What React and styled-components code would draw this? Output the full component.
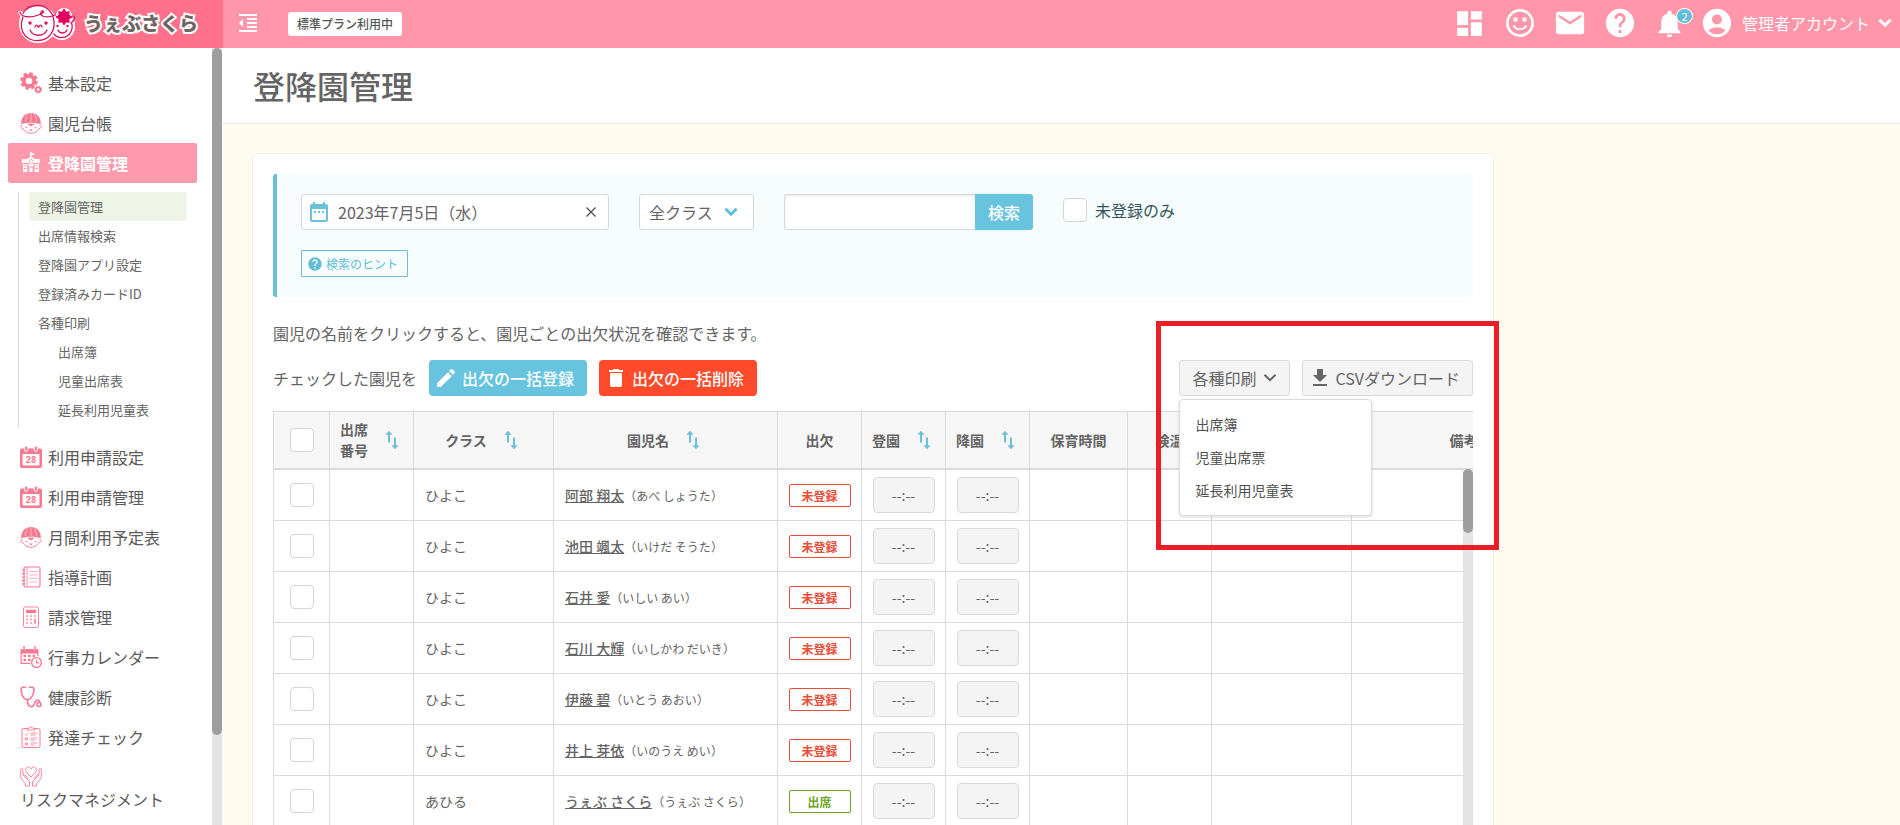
import React, { useState } from "react";
import styled, { createGlobalStyle } from "styled-components";
import {
  MdDashboard,
  MdEmail,
  MdHelp,
  MdNotifications,
  MdAccountCircle,
  MdDateRange,
  MdEdit,
  MdDelete,
  MdFileDownload,
} from "react-icons/md";

const pink = "#f8788f";

const menuTop = [
  { label: "基本設定", icon: "gears" },
  { label: "園児台帳", icon: "child" },
  { label: "登降園管理", icon: "school", active: true },
];

const subMenu = [
  { label: "登降園管理", active: true },
  { label: "出席情報検索" },
  { label: "登降園アプリ設定" },
  { label: "登録済みカードID" },
  { label: "各種印刷" },
  { label: "出席簿", nested: true },
  { label: "児童出席表", nested: true },
  { label: "延長利用児童表", nested: true },
];

const menuBottom = [
  { label: "利用申請設定", icon: "calendar" },
  { label: "利用申請管理", icon: "calendar" },
  { label: "月間利用予定表", icon: "child" },
  { label: "指導計画", icon: "notebook" },
  { label: "請求管理", icon: "calculator" },
  { label: "行事カレンダー", icon: "schedule" },
  { label: "健康診断", icon: "stethoscope" },
  { label: "発達チェック", icon: "checklist" },
  { label: "リスクマネジメント", icon: "hands" },
];

const columns = [
  { key: "check", width: 56 },
  { key: "no", label: "出席\n番号", width: 84, sort: true },
  { key: "class", label: "クラス", width: 140, sort: true },
  { key: "name", label: "園児名", width: 224, sort: true },
  { key: "status", label: "出欠", width: 84 },
  { key: "in", label: "登園", width: 84, sort: true },
  { key: "out", label: "降園", width: 84, sort: true },
  { key: "hours", label: "保育時間", width: 98 },
  { key: "temp", label: "検温", width: 84 },
  { key: "contact", label: "連絡事項", width: 140 },
  { key: "note", label: "備考", width: 224 },
];

const children = [
  { room: "ひよこ", name: "阿部 翔太", kana: "あべ しょうた" },
  { room: "ひよこ", name: "池田 颯太", kana: "いけだ そうた" },
  { room: "ひよこ", name: "石井 愛", kana: "いしい あい" },
  { room: "ひよこ", name: "石川 大輝", kana: "いしかわ だいき" },
  { room: "ひよこ", name: "伊藤 碧", kana: "いとう あおい" },
  { room: "ひよこ", name: "井上 芽依", kana: "いのうえ めい" },
  { room: "あひる", name: "うぇぶ さくら", kana: "うぇぶ さくら", present: true },
];

const prints = ["出席簿", "児童出席票", "延長利用児童表"];

const icons = {
  gears: (
    <>
      <circle cx="9" cy="9" r="5.2" fill="none" stroke={pink} strokeWidth="3.8" />
      <circle cx="9" cy="9" r="7.700" fill="none" stroke={pink} strokeWidth="2.2" strokeDasharray="3.600 2.450" />
      <circle cx="18.2" cy="17.6" r="2.3" fill="none" stroke={pink} strokeWidth="1.8" />
      <circle cx="18.2" cy="17.6" r="3.5" fill="none" stroke={pink} strokeWidth="1" strokeDasharray="1.5 1.25" />
    </>
  ),
  child: (
    <>
      <path d="M1.200 11.500C1.200 5 5.500 1 11 1s9.800 4 9.800 10.500l.9 1c-6-2.300-15.400-2.300-21.400 0z" fill={pink} />
      <path d="M11 1v9M7.500 2.500C6 5 5.500 7.500 5.500 10M14.500 2.500C16 5 16.500 7.500 16.500 10" fill="none" stroke="#fff" strokeWidth="0.500" />
      <path d="M2.500 13.500c-1.500 0-2 1-1.500 2 .4.800 1 1.100 2 1.100C4.500 19.500 7.500 21.300 11 21.300s6.500-1.800 8-4.700c1 0 1.600-.3 2-1.100.5-1 0-2-1.500-2" fill="none" stroke={pink} strokeWidth="0.900" />
      <path d="M7 12c2.500-.5 5.500-.5 8 0l-4 2.300zM9 17.600h4l-2 1.700z" fill={pink} />
      <circle cx="6.500" cy="15.500" r="0.800" fill={pink} />
      <circle cx="15.500" cy="15.500" r="0.800" fill={pink} />
    </>
  ),
  school: (
    <>
      <path d="M10.500 0v5M10.500 .8L14 2l-3.500 1.400" stroke="#fff" fill="#fff" strokeWidth="1" />
      <path d="M2.500 7h5L11 4l3.500 3h5l1 4h-19zM3 12h4.500v8H3zM14.500 12H19v8h-4.500zM8.300 11h5.400v9H8.300z" fill="#fff" />
      <circle cx="11" cy="9.500" r="2" fill="none" stroke="#ff9aab" strokeWidth="0.800" />
      <path d="M9 20v-5h4v5M4 16.500h2.500M15.500 16.500H18M4.300 14h2M15.700 14h2M8 11v9M14 11v9" stroke="#ff9aab" strokeWidth="1" fill="none" />
    </>
  ),
  calendar: (
    <>
      <path fillRule="evenodd" d="M2 2.500h18a2 2 0 0 1 2 2V20a2 2 0 0 1-2 2H2a2 2 0 0 1-2-2V4.500a2 2 0 0 1 2-2zM2.500 8v10.500a1 1 0 0 0 1 1h15a1 1 0 0 0 1-1V8z" fill={pink} />
      <rect x="4.700" y="0" width="3" height="5.500" rx="1.500" fill={pink} stroke="#fff" strokeWidth="0.900" />
      <rect x="14.300" y="0" width="3" height="5.500" rx="1.500" fill={pink} stroke="#fff" strokeWidth="0.900" />
      <text x="11" y="16.900" textAnchor="middle" fontSize="9" fontWeight="700" fontFamily="Roboto, sans-serif" fill={pink}>28</text>
    </>
  ),
  notebook: (
    <g fill="none" stroke={pink}>
      <rect x="4" y="1" width="16" height="20" rx="1.500" strokeWidth="1.200" />
      <path d="M7 1v20" strokeWidth="0.800" />
      <path d="M1.800 4h3.400M1.800 7.500h3.400M1.800 11h3.400M1.800 14.500h3.400M1.800 18h3.400" strokeWidth="1.200" />
      <path d="M9.500 5.500h8M9.500 9h8M9.500 12.500h8M9.500 16h8" strokeWidth="0.600" />
    </g>
  ),
  calculator: (
    <>
      <rect x="3.500" y="1" width="15" height="20.500" rx="1.800" fill="none" stroke={pink} strokeWidth="0.900" />
      <rect x="6" y="3.800" width="10" height="3.200" fill={pink} />
      <path d="M6.200 10h1.600M10.200 10h1.600M14.200 10h1.600M6.200 13.500h1.600M10.200 13.500h1.600M6.200 17h1.600M10.200 17h1.600" stroke={pink} strokeWidth="1.600" />
      <path d="M15 12.700v5.100" stroke={pink} strokeWidth="1.600" />
    </>
  ),
  schedule: (
    <>
      <path d="M0.700 3h17.600v4.500H0.700z" fill={pink} />
      <path d="M4 0v4M15 0v4" stroke="#fff" strokeWidth="2.600" />
      <path d="M4 0v4M15 0v4" stroke={pink} strokeWidth="1.400" />
      <path d="M1.200 5v12.300h9M17.800 6v4" fill="none" stroke={pink} strokeWidth="1.200" />
      <path d="M3.500 9.800h2.500M8 9.800h2.500M12.500 9.800H15M3.500 13.800h2.500M8 13.800h2.500" stroke={pink} strokeWidth="2.200" />
      <circle cx="16.500" cy="16.500" r="4.900" fill="#fff" stroke={pink} strokeWidth="1.300" />
      <path d="M16.500 13.500v3.300h2.800" fill="none" stroke={pink} strokeWidth="1.200" />
    </>
  ),
  stethoscope: (
    <g fill="none" stroke={pink} strokeWidth="1.600" strokeLinecap="round">
      <path d="M5.500 1.300H3.200C1.500 1.300.9 2.300 1 4c.2 4 2.300 9 5.300 9.500h2C11.500 13 13.800 8 14 4c.1-1.700-.5-2.700-2.200-2.700H9.500" />
      <path d="M7.500 13.500c-.3 4 .8 7.200 4 7.200 3.500 0 2.800-6.700 6-6.700 1.300 0 2 .9 2 2" />
      <circle cx="19" cy="18.500" r="2" />
    </g>
  ),
  checklist: (
    <g fill="none" stroke={pink}>
      <path d="M7 2.500H3.500a1.500 1.500 0 0 0-1.500 1.500v16a1.500 1.500 0 0 0 1.500 1.500h15a1.500 1.500 0 0 0 1.500-1.500V4a1.500 1.500 0 0 0-1.500-1.500H15" strokeWidth="1" />
      <path d="M7 4V2.300h2.200a1.900 1.900 0 0 1 3.600 0H15V4z" strokeWidth="0.900" />
      <path d="M5 8.200l1.200 1.200L8.500 6.500M10.500 7h7M10.500 9h5M10.500 12h7M10.500 14h5M10.500 17h7M10.500 19h4" strokeWidth="0.800" />
      <path d="M5.300 12h2v2h-2zM5.300 17h2v2h-2z" strokeWidth="0.900" />
    </g>
  ),
  hands: (
    <g fill="none" stroke={pink} strokeWidth="0.900" strokeLinejoin="round">
      <path d="M11 12L6.500 7.300C4.500 5 6 2 8.300 2c1.300 0 2.200.8 2.700 1.800C11.500 2.800 12.400 2 13.700 2 16 2 17.500 5 15.500 7.300z" />
      <path d="M.7 4.500c0-1.500 2-1.500 2.100 0l.4 6 4.500 4c1.300 1 1.800 2 1.800 3.500v3H5.300v-2.500L1.500 14C.8 13 .7 12.500.7 11.500zM3.300 10.500c1-1.200 2.200-.3 2.800.6L8 13.500" />
      <path d="M21.300 4.500c0-1.500-2-1.500-2.100 0l-.4 6-4.500 4c-1.300 1-1.800 2-1.800 3.500v3h4.200v-2.500l3.800-4.500c.7-1 .8-1.500.8-2.500zM18.700 10.500c-1-1.200-2.200-.3-2.800.6L14 13.500" />
    </g>
  ),
};

const MenuIcon = ({ name }) => (
  <svg width="22" height="22" viewBox="0 0 22 22" aria-hidden="true">
    {icons[name]}
  </svg>
);

const Chevron = ({ width = 2 }) => (
  <svg width="14" height="14" viewBox="0 0 14 14" fill="none" stroke="currentColor" strokeWidth={width} aria-hidden="true">
    <path d="M1.500 3.700L7 9.200l5.500-5.500" />
  </svg>
);

const SortIcon = () => (
  <svg width="20" height="20" viewBox="0 0 20 20" fill="none" stroke="#6cc0da" strokeWidth="2" aria-hidden="true">
    <path d="M6 12.500V3M12 7.500V17" />
    <path d="M6 .8l3.600 4H2.400zM12 19.200l3.600-4H8.400z" fill="#6cc0da" stroke="none" />
  </svg>
);

const SmileIcon = () => (
  <svg width="28" height="28" viewBox="0 0 28 28" fill="none" stroke="#fff" aria-hidden="true">
    <circle cx="14" cy="14" r="12.600" strokeWidth="2.700" />
    <circle cx="9.500" cy="10.500" r="2.200" fill="#fff" stroke="none" />
    <circle cx="18.500" cy="10.500" r="2.200" fill="#fff" stroke="none" />
    <path d="M7.500 16.500c2.800 5 10.200 5 13 0" strokeWidth="2" />
  </svg>
);

const CollapseIcon = () => (
  <svg width="18" height="18" viewBox="0 0 18 18" fill="#fff" aria-hidden="true">
    <path d="M0 0h18v2H0zM8 4h10v2H8zM8 8h10v2H8zM8 12h10v2H8zM0 16h18v2H0zM4 5v8L0 9z" />
  </svg>
);

const LogoMark = () => (
  <svg width="58" height="42" viewBox="0 0 58 42" aria-hidden="true">
    <g fill="#fff" stroke="#fff" strokeWidth="4" strokeLinejoin="round">
      <circle cx="20" cy="22" r="17" />
      <circle cx="44" cy="25" r="11" />
      <circle cx="46" cy="14" r="6" />
      <path d="M2 9c1 6 6 6 10 4" />
      <path d="M54 16l1 6" />
    </g>
    <g fill="none" stroke="#d6145f" strokeWidth="1.300" strokeLinecap="round">
      <path d="M2 10c1 6 12 6 21 2 4-2 2-5 0-2-2 4 5 7 14 3" />
      <path d="M5 15C-1 32 11 39 20 38.500c11-.5 17-9 16-19C35 9 28 3.500 20 3.500c-7 0-12 2-15 8" />
      <path d="M36 32c4 5.500 14 4.500 17-2.500 1.500-3 1.500-6 .5-9M56 14c1 3 0 5-3 7" />
      <path d="M12 28c3 7 14 7 17 0M17 25c0-2.500 3-2.500 3 0M21 25c0-2.500 3-2.500 3 0M40 28c1.500 4 7 4 9 0" />
    </g>
    <g fill="#d6145f">
      <circle cx="12" cy="21" r="1.700" />
      <circle cx="28" cy="21" r="1.700" />
      <circle cx="39.500" cy="24" r="1.200" />
      <circle cx="49.500" cy="24" r="1.200" />
    </g>
    <path
      d="M46 7.500l1.600 3.100 3.400-.6-.5 3.400 3 1.600-3 1.600.5 3.400-3.400-.6L46 22.300l-1.600-2.900-3.400.6.500-3.400-3-1.600 3-1.600-.5-3.400 3.400.6z"
      fill="#e4005f"
      stroke="#e4005f"
      strokeWidth="1.500"
      strokeLinejoin="round"
    />
  </svg>
);

export default function App() {
  const [date, setDate] = useState("2023年7月5日（水）");
  const [open, setOpen] = useState(true);

  return (
    <Page>
      <GlobalStyle />
      <Header>
        <Brand href="#">
          <LogoMark />
          <BrandName>うぇぶさくら</BrandName>
        </Brand>
        <CollapseButton aria-label="メニューを閉じる">
          <CollapseIcon />
        </CollapseButton>
        <PlanBadge>標準プラン利用中</PlanBadge>
        <HeaderTools>
          <ToolButton aria-label="ダッシュボード"><MdDashboard size={33} /></ToolButton>
          <ToolButton aria-label="スマイル"><SmileIcon /></ToolButton>
          <ToolButton aria-label="メール"><MdEmail size={34} /></ToolButton>
          <ToolButton aria-label="ヘルプ"><MdHelp size={34} /></ToolButton>
          <ToolButton aria-label="お知らせ">
            <MdNotifications size={33} />
            <Count>2</Count>
          </ToolButton>
          <AccountButton>
            <MdAccountCircle size={34} />
            管理者アカウント
            <Chevron width={3} />
          </AccountButton>
        </HeaderTools>
      </Header>

      <Body>
        <Sidebar>
          <Menu>
            {menuTop.map((item) => (
              <MenuItem href="#" key={item.label} $active={item.active}>
                <MenuIcon name={item.icon} />
                <span>{item.label}</span>
              </MenuItem>
            ))}
            <SubMenu>
              {subMenu.map((item) => (
                <SubItem href="#" key={item.label} $active={item.active} $nested={item.nested}>
                  {item.label}
                </SubItem>
              ))}
            </SubMenu>
            {menuBottom.map((item) => (
              <MenuItem href="#" key={item.label}>
                <MenuIcon name={item.icon} />
                <span>{item.label}</span>
              </MenuItem>
            ))}
          </Menu>
          <ScrollTrack><ScrollThumb $size="88.4%" /></ScrollTrack>
        </Sidebar>

        <Main>
          <TitleBar><h1>登降園管理</h1></TitleBar>
          <Card>
            <Filter>
              <FilterRow>
                <DateBox>
                  <MdDateRange size={24} color="#6cc0da" />
                  <input aria-label="日付" value={date} onChange={(e) => setDate(e.target.value)} />
                  <button aria-label="クリア" onClick={() => setDate("")}>
                    <svg width="10" height="10" viewBox="0 0 10 10" stroke="#555" strokeWidth="1.400">
                      <path d="M.5 .5l9 9M9.500 .5l-9 9" />
                    </svg>
                  </button>
                </DateBox>
                <SelectBox>
                  <select aria-label="クラス" defaultValue="all">
                    <option value="all">全クラス</option>
                    <option>ひよこ</option>
                    <option>あひる</option>
                  </select>
                  <Chevron width={3} />
                </SelectBox>
                <SearchBox>
                  <input aria-label="キーワード" />
                  <button>検索</button>
                </SearchBox>
                <CheckLabel>
                  <Checkbox type="checkbox" />
                  未登録のみ
                </CheckLabel>
              </FilterRow>
              <HintButton>
                <MdHelp size={16} />
                検索のヒント
              </HintButton>
            </Filter>

            <Lead>園児の名前をクリックすると、園児ごとの出欠状況を確認できます。</Lead>

            <Toolbar>
              <span>チェックした園児を</span>
              <BulkButton $color="#68c4de"><MdEdit size={24} />出欠の一括登録</BulkButton>
              <BulkButton $color="#ff4b2b"><MdDelete size={24} />出欠の一括削除</BulkButton>
              <Actions>
                <GrayButton $pad={12} $gap={7} onClick={() => setOpen(!open)}>
                  各種印刷
                  <Chevron />
                </GrayButton>
                <GrayButton $pad={5} $gap={3}>
                  <MdFileDownload size={24} />
                  CSVダウンロード
                </GrayButton>
                {open && (
                  <Dropdown>
                    {prints.map((p) => (
                      <a href="#" key={p}>{p}</a>
                    ))}
                  </Dropdown>
                )}
                <Highlight />
              </Actions>
            </Toolbar>

            <TableArea>
              <Table>
                <colgroup>
                  {columns.map((c) => (
                    <col key={c.key} width={c.width} />
                  ))}
                </colgroup>
                <thead>
                  <tr>
                    {columns.map((c) => (
                      <th key={c.key}>
                        <HeadCell>
                          {c.label || <Checkbox type="checkbox" aria-label="すべて選択" />}
                          {c.sort && <SortIcon />}
                        </HeadCell>
                      </th>
                    ))}
                  </tr>
                </thead>
                <tbody>
                  {children.map((c) => (
                    <tr key={c.name}>
                      <CenterCell><Checkbox type="checkbox" aria-label={c.name} /></CenterCell>
                      <td />
                      <td>{c.room}</td>
                      <td>
                        <NameLink href="#">{c.name}</NameLink>
                        <Kana>（{c.kana}）</Kana>
                      </td>
                      <CenterCell>
                        <Status $color={c.present ? "#6fa52a" : "#e8503c"}>
                          {c.present ? "出席" : "未登録"}
                        </Status>
                      </CenterCell>
                      <CenterCell><TimeButton>--:--</TimeButton></CenterCell>
                      <CenterCell><TimeButton>--:--</TimeButton></CenterCell>
                      <td />
                      <td />
                      <td />
                      <td />
                    </tr>
                  ))}
                </tbody>
              </Table>
              <TableScroll><ScrollThumb $size="64px" /></TableScroll>
            </TableArea>
          </Card>
        </Main>
      </Body>
    </Page>
  );
}

const GlobalStyle = createGlobalStyle`
  * {
    box-sizing: border-box;
  }

  body {
    margin: 0;
    overflow: hidden;
    color: #646464;
    background: #fffbee;
    font-family: "Noto Sans CJK JP", sans-serif;
    font-size: 16px;
    line-height: 24px;
  }

  button, input, select {
    margin: 0;
    padding: 0;
    border: 0;
    background: none;
    color: inherit;
    font: inherit;
  }

  button {
    cursor: pointer;
  }

  a {
    color: inherit;
    text-decoration: none;
  }

  svg {
    display: block;
    flex: none;
  }
`;

const Page = styled.div`
  display: flex;
  flex-direction: column;
  height: 100vh;
`;

const Header = styled.header`
  display: flex;
  flex: none;
  align-items: center;
  height: 48px;
  background: #ff96a9;
  color: #fff;
`;

const Brand = styled.a`
  display: flex;
  align-items: center;
  gap: 8px;
  width: 223px;
  height: 100%;
  padding: 0 0 2px 18px;
  background: #ff708a;
`;

const BrandName = styled.span`
  color: #6f6563;
  font-size: 19px;
  font-weight: 900;
  -webkit-text-stroke: 4px #fff;
  paint-order: stroke fill;
`;

const CollapseButton = styled.button`
  margin: 0 31px 2px 16px;
`;

const PlanBadge = styled.span`
  padding: 0 9px;
  border-radius: 3px;
  background: #fff;
  color: #555;
  font-size: 12px;
  font-weight: 500;
`;

const HeaderTools = styled.div`
  display: flex;
  align-items: center;
  margin-left: auto;
  padding: 0 8px 2px 0;
`;

const ToolButton = styled.button`
  position: relative;
  display: flex;
  justify-content: center;
  width: 50px;
`;

const Count = styled.span`
  position: absolute;
  top: 1px;
  right: 2px;
  width: 17px;
  height: 16px;
  border: 1px solid #fff;
  border-radius: 50%;
  background: #62bdd8;
  font-size: 11px;
  line-height: 15px;
`;

const AccountButton = styled.button`
  display: flex;
  align-items: center;
  gap: 8px;
  padding-left: 5px;
`;

const Body = styled.div`
  display: flex;
  flex: 1;
  min-height: 0;
`;

const Sidebar = styled.aside`
  display: flex;
  flex: none;
  width: 223px;
  background: #fff;
`;

const Menu = styled.nav`
  flex: 1;
  padding: 15px 15px 0 8px;
  overflow: hidden;
`;

const MenuItem = styled.a`
  display: flex;
  flex-wrap: wrap;
  align-items: center;
  column-gap: 6px;
  padding: 8px 12px;
  border-radius: 2px;
  background: ${(p) => (p.$active ? "#ff9aac" : "none")};
  color: ${(p) => (p.$active ? "#fff" : "#5a5a5a")};
  font-weight: ${(p) => (p.$active ? 700 : 400)};
`;

const SubMenu = styled.div`
  margin: 9px 10px 10px;
  padding: 0 0 3px 10px;
  border-left: 1px solid #d8d8d8;
`;

const SubItem = styled.a`
  display: block;
  padding-left: ${(p) => (p.$nested ? 29 : 9)}px;
  border-radius: 2px;
  background: ${(p) => (p.$active ? "#eef5e6" : "none")};
  font-size: 13px;
  line-height: 29px;
`;

const ScrollTrack = styled.div`
  width: 10px;
  margin-right: 1px;
  background: #e4e4e4;
`;

const ScrollThumb = styled.div`
  height: ${(p) => p.$size};
  border-radius: 5px;
  background: #9e9e9e;
`;

const Main = styled.main`
  flex: 1;
  min-width: 0;
  overflow: hidden;
`;

const TitleBar = styled.div`
  padding: 13px 30px 14px;
  border-bottom: 1px solid #e9e9e9;
  background: #fff;

  h1 {
    margin: 0;
    font-size: 32px;
    font-weight: 500;
    line-height: 48px;
  }
`;

const Card = styled.section`
  max-width: 1242px;
  margin: 29px;
  padding: 20px;
  border: 1px solid #f0eee8;
  border-radius: 6px;
  background: #fff;
`;

const Filter = styled.div`
  display: flex;
  flex-direction: column;
  align-items: flex-start;
  gap: 20px;
  padding: 20px 24px;
  border-left: 4px solid #6cc0d6;
  border-radius: 3px;
  background: #f7fdfd;
`;

const FilterRow = styled.div`
  display: flex;
  flex-wrap: wrap;
  gap: 30px;
`;

const DateBox = styled.div`
  display: flex;
  align-items: center;
  gap: 7px;
  width: 308px;
  height: 36px;
  padding: 0 7px 0 5px;
  border: 1px solid #d8d8d8;
  border-radius: 3px;
  background: #fff;

  input {
    flex: 1;
    min-width: 0;
  }

  button {
    padding: 5px;
  }
`;

const SelectBox = styled.div`
  display: flex;
  align-items: center;
  width: 115px;
  height: 36px;
  border: 1px solid #d8d8d8;
  border-radius: 3px;
  background: #fff;
  color: #62bdd8;

  select {
    width: 84px;
    padding-left: 9px;
    appearance: none;
    color: #646464;
  }
`;

const SearchBox = styled.div`
  display: flex;
  height: 36px;

  input {
    width: 191px;
    padding: 0 8px;
    border: 1px solid #d8d8d8;
    border-right: 0;
    border-radius: 3px 0 0 3px;
    background: #fff;
    box-shadow: inset 0 1px 2px rgba(0, 0, 0, 0.1);
  }

  button {
    width: 58px;
    border-radius: 0 3px 3px 0;
    background: #68c4de;
    color: #fff;
    font-weight: 500;
  }
`;

const CheckLabel = styled.label`
  display: flex;
  align-items: center;
  gap: 8px;
  height: 32px;
  color: #35555e;
`;

const Checkbox = styled.input`
  width: 24px;
  height: 24px;
  border: 1px solid #d5d5d5;
  border-radius: 4px;
  background: #fff;
  appearance: none;
  vertical-align: middle;

  &:checked {
    background: #68c4de;
  }
`;

const HintButton = styled.button`
  display: flex;
  align-items: center;
  gap: 3px;
  height: 27px;
  padding: 0 9px 0 5px;
  border: 1px solid #6cc0d6;
  border-radius: 1px;
  color: #62bdd8;
  font-size: 12px;
`;

const Lead = styled.p`
  margin: 24px 0 15px;
`;

const Toolbar = styled.div`
  display: flex;
  align-items: center;
  margin-bottom: 15px;
`;

const BulkButton = styled.button`
  display: flex;
  align-items: center;
  gap: 4px;
  height: 36px;
  margin-left: 12px;
  padding: 0 13px 0 5px;
  border-radius: 4px;
  background: ${(p) => p.$color};
  color: #fff;
  font-weight: 500;
`;

const Actions = styled.div`
  position: relative;
  display: flex;
  gap: 12px;
  margin-left: auto;
`;

const GrayButton = styled.button`
  display: flex;
  align-items: center;
  gap: ${(p) => p.$gap}px;
  height: 36px;
  padding: 0 12px 0 ${(p) => p.$pad}px;
  border: 1px solid #dadada;
  border-radius: 3px;
  background: #f4f4f4;
`;

const Dropdown = styled.div`
  position: absolute;
  z-index: 2;
  top: 39px;
  left: 0;
  width: 193px;
  padding: 8px 0;
  border: 1px solid #dcdcdc;
  border-radius: 4px;
  background: #fff;
  box-shadow: 0 1px 3px rgba(0, 0, 0, 0.15);
  color: #505050;
  font-size: 14px;

  a {
    display: block;
    padding: 0 15px;
    line-height: 33px;
  }
`;

const Highlight = styled.div`
  position: absolute;
  z-index: 1;
  inset: -39px -26px -154px -23px;
  border: 5px solid #e81f27;
  pointer-events: none;
`;

const TableArea = styled.div`
  position: relative;
  overflow: hidden;
`;

const Table = styled.table`
  width: 1302px;
  border-collapse: separate;
  border-spacing: 0;
  border-top: 1px solid #dadada;
  table-layout: fixed;
  font-size: 14px;
  line-height: 21px;

  th {
    height: 58px;
    padding: 0;
    border-bottom: 2px solid #dadada;
    border-left: 1px solid #dadada;
    background: #f6f6f6;
    white-space: pre;
  }

  td {
    height: 51px;
    padding: 0 0 0 11px;
    border-bottom: 1px solid #dadada;
    border-left: 1px solid #dadada;
    white-space: nowrap;
  }
`;

const HeadCell = styled.div`
  display: flex;
  align-items: center;
  justify-content: center;
  gap: 15px;
`;

const CenterCell = styled.td`
  && {
    padding: 0;
    text-align: center;
  }
`;

const NameLink = styled.a`
  font-weight: 500;
  text-decoration: underline;
`;

const Kana = styled.span`
  font-size: 12px;
`;

const Status = styled.button`
  width: 62px;
  height: 23px;
  border: 1px solid currentColor;
  border-radius: 2px;
  color: ${(p) => p.$color};
  font-size: 12px;
  font-weight: 700;
  line-height: 21px;
  vertical-align: middle;
`;

const TimeButton = styled.button`
  width: 62px;
  height: 36px;
  border: 1px solid #dadada;
  border-radius: 4px;
  background: #f4f4f4;
  vertical-align: middle;
`;

const TableScroll = styled.div`
  position: absolute;
  top: 58px;
  right: 0;
  bottom: 0;
  width: 10px;
  background: #e4e4e4;
`;
